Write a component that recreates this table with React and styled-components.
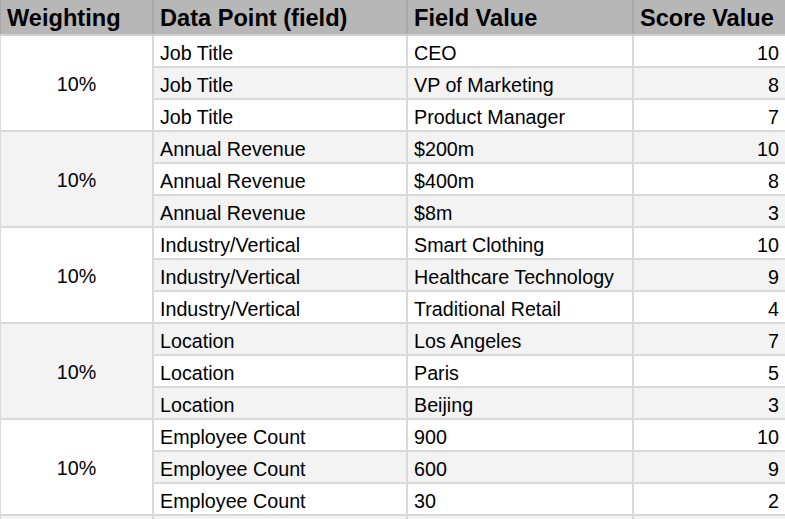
import React from 'react';
import styled, { createGlobalStyle } from 'styled-components';

const GlobalStyle = createGlobalStyle`
    html, body {
        margin: 0;
        padding: 0;
        background: #FFF;
        overflow: hidden;
    }
    body {
        font-family: "Liberation Sans", Arial, sans-serif;
        color: #000;
    }
`;

const Sheet = styled.div`
    width: 785px;
    height: 519px;
    overflow: hidden;
`;

const HeaderRow = styled.div`
    display: grid;
    grid-template-columns: 151px 252px 224px 151px;
    column-gap: 2px;
    padding-left: 1px;
    height: 34px;
    background: #A9A9A9;
    border-bottom: 2px solid #CFCFCF;
`;

const HeaderCell = styled.div`
    display: flex;
    align-items: flex-end;
    padding: 0 6px 2px;
    background: #B7B7B7;
    font-size: 23.6px;
    font-weight: 700;
    line-height: normal;
    white-space: nowrap;
    overflow: hidden;
`;

const Body = styled.div`
    display: grid;
    grid-template-columns: 151px 252px 224px 151px;
    grid-auto-rows: 30px;
    gap: 2px;
    padding-left: 1px;
    background: #D9D9D9;
`;

const Cell = styled.div`
    display: flex;
    align-items: flex-end;
    justify-content: ${(p) => (p.$right ? 'flex-end' : 'flex-start')};
    padding: 0 6px 1px;
    background: ${(p) => (p.$shaded ? '#F3F3F3' : '#FFF')};
    font-size: 19.7px;
    line-height: normal;
    white-space: nowrap;
    overflow: hidden;
`;

const WeightCell = styled.div`
    grid-row: span 3;
    display: flex;
    align-items: center;
    justify-content: center;
    padding-top: 3px;
    background: ${(p) => (p.$shaded ? '#F3F3F3' : '#FFF')};
    font-size: 19.7px;
    line-height: normal;
`;

const groups = [
    {
        weight: '10%',
        field: 'Job Title',
        rows: [['CEO', 10], ['VP of Marketing', 8], ['Product Manager', 7]],
    },
    {
        weight: '10%',
        field: 'Annual Revenue',
        rows: [['$200m', 10], ['$400m', 8], ['$8m', 3]],
    },
    {
        weight: '10%',
        field: 'Industry/Vertical',
        rows: [['Smart Clothing', 10], ['Healthcare Technology', 9], ['Traditional Retail', 4]],
    },
    {
        weight: '10%',
        field: 'Location',
        rows: [['Los Angeles', 7], ['Paris', 5], ['Beijing', 3]],
    },
    {
        weight: '10%',
        field: 'Employee Count',
        rows: [['900', 10], ['600', 9], ['30', 2]],
    },
    {
        weight: '',
        field: '',
        rows: [['', ''], ['', ''], ['', '']],
    },
];

function App() {
    return (
        <Sheet>
            <GlobalStyle />
            <HeaderRow>
                <HeaderCell>Weighting</HeaderCell>
                <HeaderCell>Data Point (field)</HeaderCell>
                <HeaderCell>Field Value</HeaderCell>
                <HeaderCell>Score Value</HeaderCell>
            </HeaderRow>
            <Body>
                {groups.map((group, g) => (
                    <React.Fragment key={g}>
                        <WeightCell $shaded={g % 2 === 1} style={{ gridRow: `${g * 3 + 1} / span 3` }}>
                            {group.weight}
                        </WeightCell>
                        {group.rows.map(([value, score], r) => {
                            const shaded = (g * 3 + r) % 2 === 1;
                            const row = g * 3 + r + 1;
                            return (
                                <React.Fragment key={r}>
                                    <Cell $shaded={shaded} style={{ gridRow: row, gridColumn: 2 }}>{group.field}</Cell>
                                    <Cell $shaded={shaded} style={{ gridRow: row, gridColumn: 3 }}>{value}</Cell>
                                    <Cell $shaded={shaded} $right style={{ gridRow: row, gridColumn: 4 }}>{score}</Cell>
                                </React.Fragment>
                            );
                        })}
                    </React.Fragment>
                ))}
            </Body>
        </Sheet>
    );
}

export default App;
